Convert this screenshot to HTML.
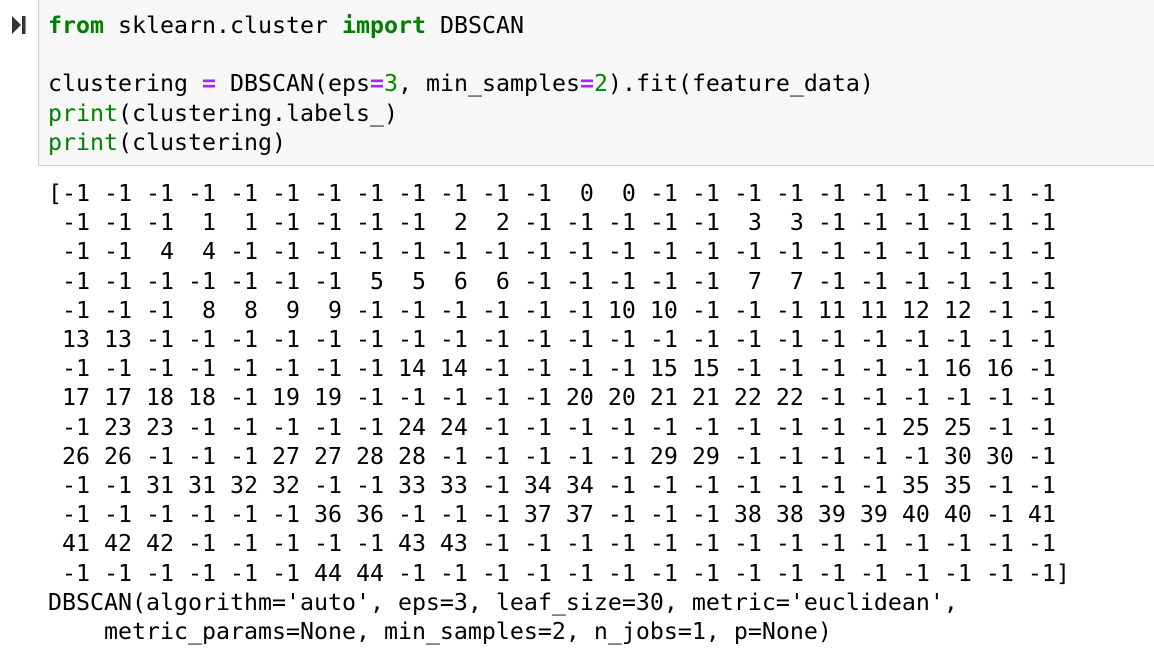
<!DOCTYPE html>
<html><head><meta charset="utf-8"><style>
body{margin:0;background:#fff;width:1154px;height:650px;overflow:hidden;position:relative;font-family:"DejaVu Sans Mono","Liberation Mono",monospace;font-size:23.25px;}
.box{position:absolute;left:38px;top:-4px;width:1130px;height:168px;background:#f7f7f7;border:1px solid #cfcfcf;border-radius:2px;}
pre{margin:0;font-family:inherit;font-size:inherit;line-height:29.2px;position:absolute;left:48px;white-space:pre;color:#000;}
.k{color:#008000;font-weight:bold}.g{color:#008000}.o{color:#aa22ff;font-weight:bold}.n{color:#080}
</style></head><body>
<div class="box"></div>
<svg style="position:absolute;left:12px;top:16px" width="14" height="18" viewBox="0 0 14 18"><path d="M0 0 L9 9 L0 18Z" fill="#333"/><rect x="10" y="0" width="3.5" height="18" fill="#333"/></svg>
<pre style="top:11px"><span class="k">from</span> sklearn.cluster <span class="k">import</span> DBSCAN

clustering <span class="o">=</span> DBSCAN(eps<span class="o">=</span><span class="n">3</span>, min_samples<span class="o">=</span><span class="n">2</span>).fit(feature_data)
<span class="g">print</span>(clustering.labels_)
<span class="g">print</span>(clustering)</pre>
<pre style="top:179px">[-1 -1 -1 -1 -1 -1 -1 -1 -1 -1 -1 -1  0  0 -1 -1 -1 -1 -1 -1 -1 -1 -1 -1
 -1 -1 -1  1  1 -1 -1 -1 -1  2  2 -1 -1 -1 -1 -1  3  3 -1 -1 -1 -1 -1 -1
 -1 -1  4  4 -1 -1 -1 -1 -1 -1 -1 -1 -1 -1 -1 -1 -1 -1 -1 -1 -1 -1 -1 -1
 -1 -1 -1 -1 -1 -1 -1  5  5  6  6 -1 -1 -1 -1 -1  7  7 -1 -1 -1 -1 -1 -1
 -1 -1 -1  8  8  9  9 -1 -1 -1 -1 -1 -1 10 10 -1 -1 -1 11 11 12 12 -1 -1
 13 13 -1 -1 -1 -1 -1 -1 -1 -1 -1 -1 -1 -1 -1 -1 -1 -1 -1 -1 -1 -1 -1 -1
 -1 -1 -1 -1 -1 -1 -1 -1 14 14 -1 -1 -1 -1 15 15 -1 -1 -1 -1 -1 16 16 -1
 17 17 18 18 -1 19 19 -1 -1 -1 -1 -1 20 20 21 21 22 22 -1 -1 -1 -1 -1 -1
 -1 23 23 -1 -1 -1 -1 -1 24 24 -1 -1 -1 -1 -1 -1 -1 -1 -1 -1 25 25 -1 -1
 26 26 -1 -1 -1 27 27 28 28 -1 -1 -1 -1 -1 29 29 -1 -1 -1 -1 -1 30 30 -1
 -1 -1 31 31 32 32 -1 -1 33 33 -1 34 34 -1 -1 -1 -1 -1 -1 -1 35 35 -1 -1
 -1 -1 -1 -1 -1 -1 36 36 -1 -1 -1 37 37 -1 -1 -1 38 38 39 39 40 40 -1 41
 41 42 42 -1 -1 -1 -1 -1 43 43 -1 -1 -1 -1 -1 -1 -1 -1 -1 -1 -1 -1 -1 -1
 -1 -1 -1 -1 -1 -1 44 44 -1 -1 -1 -1 -1 -1 -1 -1 -1 -1 -1 -1 -1 -1 -1 -1]
DBSCAN(algorithm='auto', eps=3, leaf_size=30, metric='euclidean',
    metric_params=None, min_samples=2, n_jobs=1, p=None)</pre>
</body></html>
